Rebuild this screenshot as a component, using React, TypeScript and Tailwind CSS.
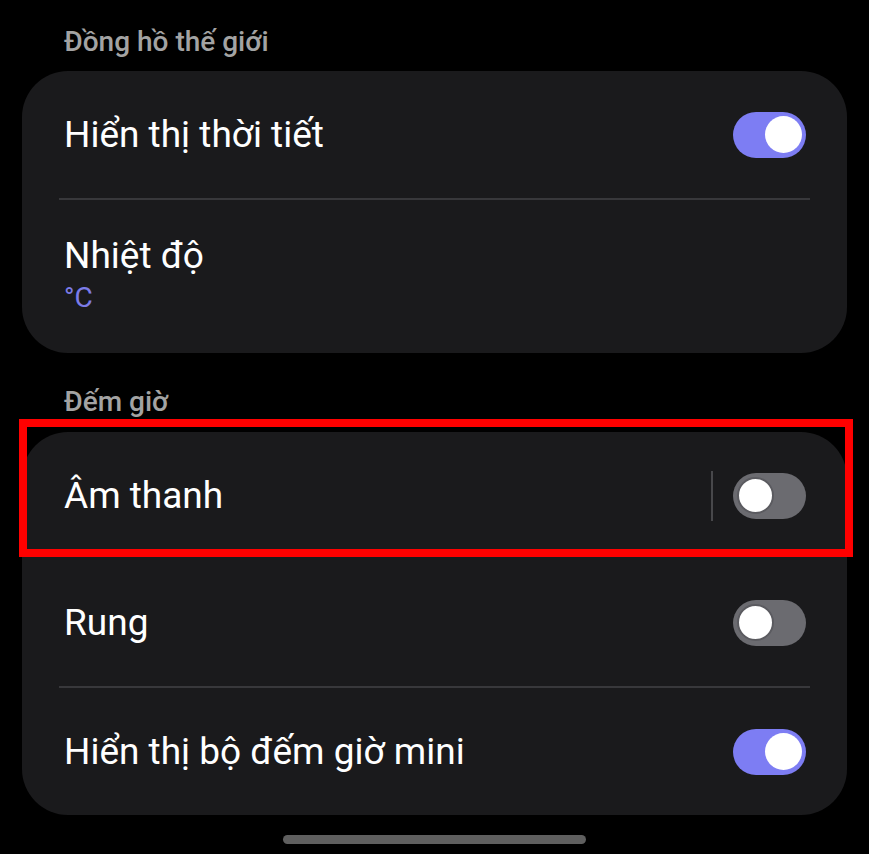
import React from 'react';

const Toggle = ({ on }: { on: boolean }) => (
  <div
    className={`w-[73px] h-[46px] rounded-full flex items-center px-[4px] ${
      on ? 'bg-[#7d7df3] justify-end' : 'bg-[#6b6b70] justify-start'
    }`}
  >
    <div
      className={`w-[37px] h-[37px] rounded-full bg-white ${on ? '' : 'border-2 border-[#5b5b60]'}`}
    />
  </div>
);

const Divider = () => <div className="mx-[37px] h-[2px] bg-[#38383b]" />;

const SectionTitle = ({ children }: { children: React.ReactNode }) => (
  <div className="px-[64px] text-[28px] font-medium text-[#a3a3a3] leading-none">{children}</div>
);

const ToggleRow = ({ label, on, separator }: { label: string; on: boolean; separator?: boolean }) => (
  <div className="h-[127px] flex items-center pl-[42px] pr-[41px]">
    <div className="flex-1 text-[37px] text-white leading-none">{label}</div>
    {separator && <div className="w-[2px] h-[50px] bg-[#48484b] mr-[20px]" />}
    <Toggle on={on} />
  </div>
);

export default function App() {
  return (
    <div
      className="relative w-[869px] h-[854px] bg-black overflow-hidden"
      style={{ fontFamily: 'Roboto, "Noto Sans", sans-serif' }}
    >
      <div className="pt-[28px]">
        <SectionTitle>Đồng hồ thế giới</SectionTitle>
      </div>

      <div className="mx-[22px] mt-[15px] rounded-[46px] bg-[#1a1a1c]">
        <ToggleRow label="Hiển thị thời tiết" on />
        <Divider />
        <div className="h-[153px] flex flex-col justify-center pl-[42px] pb-[4px]">
          <div className="text-[37px] text-white leading-none">Nhiệt độ</div>
          <div className="mt-[10px] text-[28px] text-[#7c7ce8] leading-none">°C</div>
        </div>
      </div>

      <div className="pt-[35px]">
        <SectionTitle>Đếm giờ</SectionTitle>
      </div>

      <div className="mx-[22px] mt-[16px] rounded-[46px] bg-[#1a1a1c]">
        <ToggleRow label="Âm thanh" on={false} separator />
        <ToggleRow label="Rung" on={false} />
        <Divider />
        <ToggleRow label="Hiển thị bộ đếm giờ mini" on />
      </div>

      <div className="flex justify-center mt-[20px]">
        <div className="w-[303px] h-[9px] rounded-full bg-[#5f5f5f]" />
      </div>

      {/* annotation frame */}
      <div className="absolute left-[19px] top-[419px] w-[834px] h-[138px] border-[8px] border-[#ff0000] pointer-events-none" />
    </div>
  );
}
